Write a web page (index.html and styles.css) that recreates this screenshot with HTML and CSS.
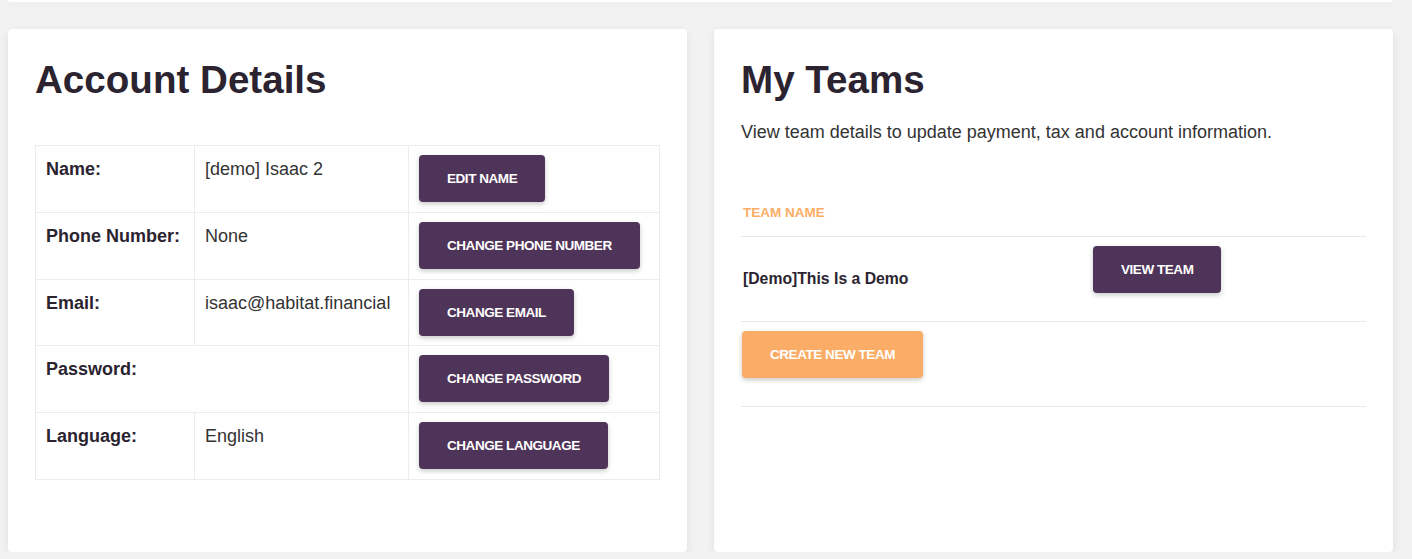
FILE: index.html
```html
<!DOCTYPE html>
<html lang="en">
<head>
    <meta charset="UTF-8">
    <meta name="viewport" content="width=device-width, initial-scale=1.0">
    <title>Account</title>
    <link rel="stylesheet" href="styles.css">
</head>
<body>

    <div class="page">

        <div class="card-top"></div>

        <main class="painel">

            <section class="card">
                <h1>Account Details</h1>

                <table class="detalhes">
                    <tr>
                        <td class="rotulo">Name:</td>
                        <td class="valor">[demo] Isaac 2</td>
                        <td class="acao"><button class="btn">Edit Name</button></td>
                    </tr>
                    <tr>
                        <td class="rotulo">Phone Number:</td>
                        <td class="valor">None</td>
                        <td class="acao"><button class="btn">Change Phone Number</button></td>
                    </tr>
                    <tr>
                        <td class="rotulo">Email:</td>
                        <td class="valor">isaac@habitat.financial</td>
                        <td class="acao"><button class="btn">Change Email</button></td>
                    </tr>
                    <tr>
                        <td class="rotulo" colspan="2">Password:</td>
                        <td class="acao"><button class="btn">Change Password</button></td>
                    </tr>
                    <tr>
                        <td class="rotulo">Language:</td>
                        <td class="valor">English</td>
                        <td class="acao"><button class="btn">Change Language</button></td>
                    </tr>
                </table>
            </section>

            <section class="card">
                <h1>My Teams</h1>
                <p class="subtitulo">View team details to update payment, tax and account information.</p>

                <table class="times">
                    <thead>
                        <tr>
                            <th class="col-nome">Team Name</th>
                            <th></th>
                        </tr>
                    </thead>
                    <tbody>
                        <tr>
                            <td class="nome-time">[Demo]This Is a Demo</td>
                            <td class="acao-time"><button class="btn">View Team</button></td>
                        </tr>
                    </tbody>
                </table>

                <div class="rodape-times">
                    <button class="btn btn-laranja">Create New Team</button>
                </div>
            </section>

        </main>

    </div>

</body>
</html>
```

FILE: styles.css
```css
body{
    margin: 0;
    background-color: #f2f2f2;
    font-family: "Liberation Sans", Arial, sans-serif;
    color: #2b2430;
}

.page{
    padding: 0 19px 0 8px;
}

.card-top{
    height: 2px;
    background-color: white;
    border-radius: 0 0 4px 4px;
    box-shadow: 0 2px 6px rgba(0, 0, 0, 0.06);
}

.painel{
    display: grid;
    grid-template-columns: 1fr 1fr;
    gap: 27px;
    margin-top: 27px;
}

.card{
    height: 523px;
    box-sizing: border-box;
    padding: 29px 27px;
    background-color: white;
    border-radius: 4px;
    box-shadow: 0 3px 10px rgba(0, 0, 0, 0.08);
}

h1{
    margin: 0;
    font-size: 38.6px;
    line-height: 44px;
    font-weight: bold;
    color: #2b2430;
}

.detalhes{
    width: 100%;
    margin-top: 43px;
    border-collapse: collapse;
    font-size: 18px;
    line-height: 27px;
}

.detalhes td{
    border: 1px solid #ececec;
    padding: 10px 10px;
    vertical-align: top;
}

.rotulo{
    width: 138px;
    font-weight: bold;
    color: #2b2430;
}

.valor{
    width: 193px;
    color: #333;
}

.detalhes .acao{
    padding: 9px 10px 9.8px;
}

.btn{
    height: 47px;
    padding: 0 28px;
    border: 0;
    border-radius: 4px;
    background-color: #4f3459;
    color: white;
    font-family: "Liberation Sans", Arial, sans-serif;
    font-size: 13.5px;
    font-weight: bold;
    letter-spacing: -0.45px;
    text-transform: uppercase;
    box-shadow: 0 2px 5px rgba(0, 0, 0, 0.22);
    cursor: pointer;
}

.subtitulo{
    margin: 17px 0 0;
    font-size: 18px;
    line-height: 27px;
    color: #333;
}

.times{
    width: 100%;
    margin-top: 44px;
    border-collapse: collapse;
}

.times th{
    padding: 13px 2px 13px;
    text-align: left;
    font-size: 13.5px;
    line-height: 20px;
    font-weight: bold;
    text-transform: uppercase;
    color: #fbad66;
    border-bottom: 1px solid #e8e8e8;
}

.col-nome{
    width: 348px;
}

.times td{
    border-bottom: 1px solid #e8e8e8;
}

.nome-time{
    padding: 0 2px;
    vertical-align: middle;
    font-size: 15.75px;
    font-weight: bold;
    color: #2b2430;
}

.acao-time{
    padding: 9px 0 28px;
    vertical-align: top;
}

.rodape-times{
    padding: 9px 0 28px 1px;
    border-bottom: 1px solid #e8e8e8;
}

.btn-laranja{
    background-color: #fbac66;
}
```
